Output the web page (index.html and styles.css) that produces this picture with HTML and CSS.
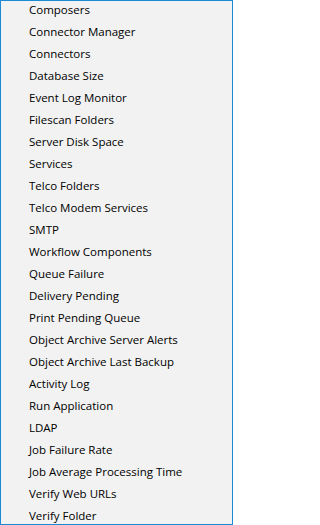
FILE: index.html
```html
<!DOCTYPE html>
<html>
<head>
<meta charset="utf-8">
<link rel="stylesheet" href="styles.css">
</head>
<body>
<div class="menu">
  <ul class="items">
    <li>Composers</li>
    <li>Connector Manager</li>
    <li>Connectors</li>
    <li>Database Size</li>
    <li>Event Log Monitor</li>
    <li>Filescan Folders</li>
    <li>Server Disk Space</li>
    <li>Services</li>
    <li>Telco Folders</li>
    <li>Telco Modem Services</li>
    <li>SMTP</li>
    <li>Workflow Components</li>
    <li>Queue Failure</li>
    <li>Delivery Pending</li>
    <li>Print Pending Queue</li>
    <li>Object Archive Server Alerts</li>
    <li>Object Archive Last Backup</li>
    <li>Activity Log</li>
    <li>Run Application</li>
    <li>LDAP</li>
    <li>Job Failure Rate</li>
    <li>Job Average Processing Time</li>
    <li>Verify Web URLs</li>
    <li>Verify Folder</li>
  </ul>
</div>
</body>
</html>
```
FILE: styles.css
```css
html, body {
  margin: 0;
  padding: 0;
}
body {
  width: 233px;
  height: 525px;
  overflow: hidden;
}
.menu {
  box-sizing: border-box;
  width: 233px;
  height: 525px;
  border: 1px solid #1a8ad4;
  background: #f2f2f2;
  overflow: hidden;
}
.items {
  list-style: none;
  margin: -2px 0 0 0;
  padding: 0;
}
.items li {
  height: 22px;
  line-height: 22px;
  padding-left: 28px;
  font-family: "Open Sans", "Noto Sans", sans-serif;
  font-size: 11.5px;
  color: #000;
  white-space: nowrap;
}
```
